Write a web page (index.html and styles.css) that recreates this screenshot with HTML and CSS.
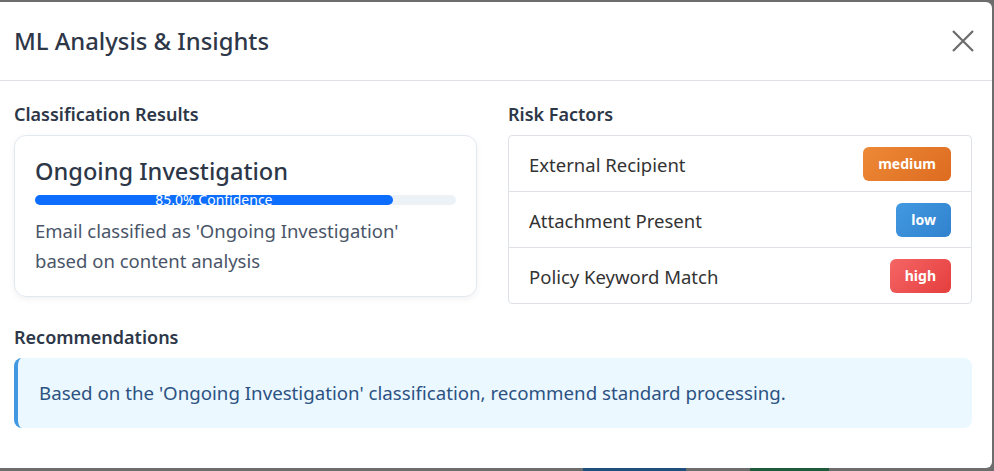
FILE: index.html
```html
<!DOCTYPE html>
<html lang="en">
<head>
<meta charset="utf-8">
<title>ML Analysis &amp; Insights</title>
<link rel="stylesheet" href="styles.css">
</head>
<body>
<div class="backdrop">
  <div class="modal">
    <div class="modal-header">
      <h2 class="modal-title">ML Analysis &amp; Insights</h2>
      <button class="close" aria-label="Close">
        <svg width="22" height="22" viewBox="0 0 22 22"><path d="M1 1L21 21M21 1L1 21" stroke="#6b6b6b" stroke-width="2.2" fill="none"/></svg>
      </button>
    </div>
    <div class="modal-body">
      <div class="row">
        <div class="col">
          <h3 class="section-title">Classification Results</h3>
          <div class="card">
            <div class="card-title">Ongoing Investigation</div>
            <div class="progress">
              <div class="progress-fill" style="width:85%"><span>85.0% Confidence</span></div>
            </div>
            <p class="card-text">Email classified as 'Ongoing Investigation' based on content analysis</p>
          </div>
        </div>
        <div class="col">
          <h3 class="section-title">Risk Factors</h3>
          <ul class="list">
            <li class="list-item"><span>External Recipient</span><span class="badge medium">medium</span></li>
            <li class="list-item"><span>Attachment Present</span><span class="badge low">low</span></li>
            <li class="list-item"><span>Policy Keyword Match</span><span class="badge high">high</span></li>
          </ul>
        </div>
      </div>
      <h3 class="section-title">Recommendations</h3>
      <div class="alert">Based on the 'Ongoing Investigation' classification, recommend standard processing.</div>
    </div>
  </div>
  <div class="page-buttons">
    <span class="pb blue"></span>
    <span class="pb green"></span>
  </div>
</div>
</body>
</html>
```

FILE: styles.css
```css
* { box-sizing: border-box; }
html, body { margin: 0; padding: 0; }
body {
  background: #6d6d6d;
  font-family: "Noto Sans", "Open Sans", sans-serif;
  width: 994px;
  height: 471px;
  overflow: hidden;
}
.backdrop {
  padding-top: 2px;
}
.modal {
  margin-left: -8px;
  width: 1000px;
  height: 466px;
  background: #fff;
  border-radius: 6px;
}
.modal-header {
  display: flex;
  align-items: center;
  justify-content: space-between;
  padding: 21px 20px 21px 22px;
  border-bottom: 1px solid #dee2e6;
}
.modal-title {
  margin: 0;
  font-size: 23.8px;
  line-height: 36px;
  font-weight: 500;
  color: #2d3748;
}
.close {
  border: 0;
  background: none;
  padding: 0;
  margin-right: -2px;
  width: 22px;
  height: 22px;
  display: flex;
}
.modal-body {
  padding: 22px 29px 41px 22px;
}
.row {
  display: grid;
  grid-template-columns: 463px 464px;
  column-gap: 31px;
  margin-bottom: 22px;
}
.section-title {
  margin: 0 0 10px;
  font-size: 18px;
  line-height: 22px;
  font-weight: 600;
  color: #2d3748;
}
.card {
  border: 1px solid #e2e8f0;
  border-radius: 12px;
  padding: 20px;
  box-shadow: 0 2px 6px rgba(0,0,0,0.06);
}
.card-title {
  font-size: 23.6px;
  line-height: 30px;
  font-weight: 500;
  color: #2d3748;
  margin-bottom: 9px;
}
.progress {
  height: 10px;
  background: #edf2f7;
  border-radius: 5px;
}
.progress-fill {
  height: 10px;
  background: #0d6efd;
  border-radius: 5px;
  display: flex;
  align-items: center;
  justify-content: center;
  overflow: visible;
  white-space: nowrap;
}
.progress-fill span {
  color: #fff;
  font-size: 14px;
  line-height: 10px;
}
.card-text {
  margin: 11px 0 0;
  padding-right: 40px;
  font-size: 18.5px;
  line-height: 30px;
  color: #4a5568;
}
.list {
  list-style: none;
  margin: 0;
  padding: 0;
  border: 1px solid #dee2e6;
  border-radius: 4px;
}
.list-item {
  display: flex;
  align-items: center;
  justify-content: space-between;
  padding: 11px 20px 10px;
  font-size: 18.5px;
  color: #333;
  border-top: 1px solid #dee2e6;
}
.list-item:first-child { border-top: 0; }
.badge {
  height: 34px;
  line-height: 34px;
  padding: 0 15px;
  border-radius: 6px;
  color: #fff;
  font-size: 14px;
  font-weight: 700;
}
.badge.medium { background: linear-gradient(135deg, #ed8936, #dd6b20); }
.badge.low { background: linear-gradient(135deg, #4299e1, #3182ce); }
.badge.high { background: linear-gradient(135deg, #f56565, #e53e3e); }
.alert {
  width: 958px;
  margin-top: 0;
  background: #ebf8ff;
  border-left: 4px solid #4299e1;
  border-radius: 8px;
  padding: 20px 21px;
  font-size: 18.7px;
  line-height: 30px;
  color: #2c5282;
}
.page-buttons {
  display: flex;
  padding-left: 583px;
}
.pb { display: block; height: 4px; }
.pb.blue { width: 103px; background: #1f4f7d; }
.pb.green { width: 79px; margin-left: 64px; background: #1e5b3a; }
```
